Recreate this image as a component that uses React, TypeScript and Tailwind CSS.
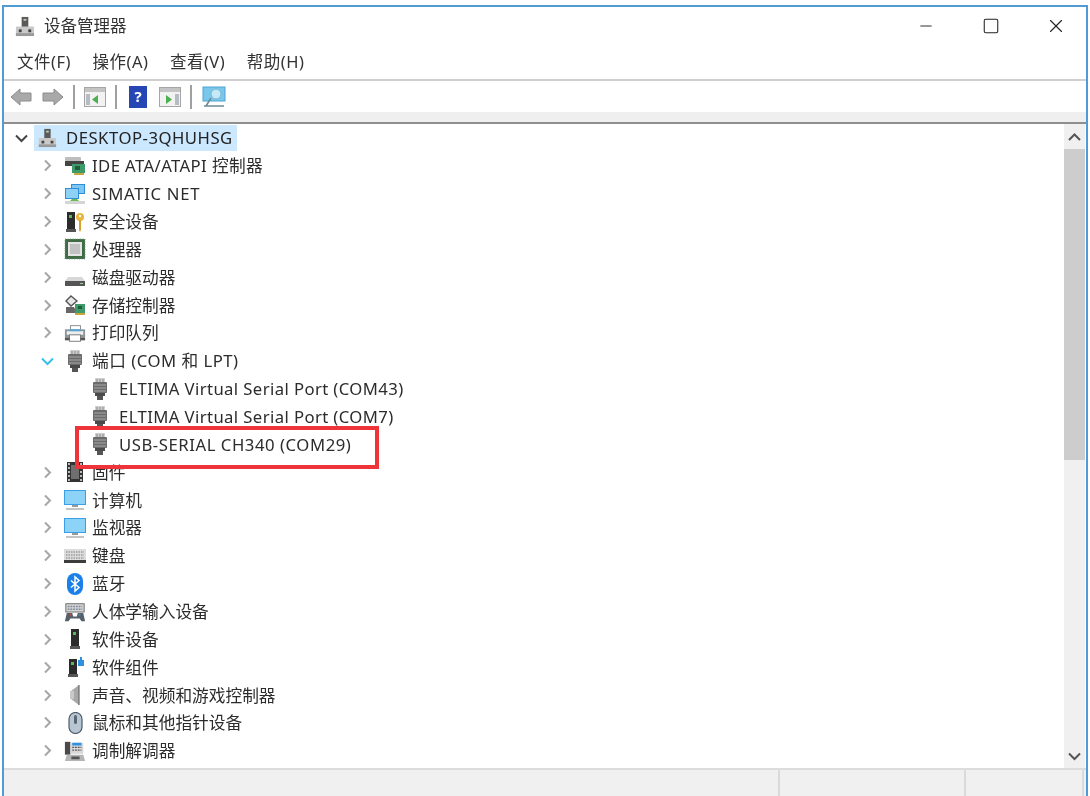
import { Minus, Square, X } from "lucide-react";

const font = { fontFamily: '"Noto Sans", "Noto Sans CJK SC", sans-serif' };

function Caret({ dir, className }: { dir: "right" | "down" | "up"; className: string }) {
  const d = dir === "right" ? "M2 1.5L7 6.5L2 11.5" : dir === "down" ? "M1 2.5L6.5 8L12 2.5" : "M1 8L6.5 2.5L12 8";
  const w = dir === "right" ? 9 : 13;
  const h = dir === "right" ? 13 : 10;
  return (
    <svg width={w} height={h} viewBox={`0 0 ${w} ${h}`} className={className}>
      <path d={d} fill="none" stroke="currentColor" strokeWidth="2" />
    </svg>
  );
}

function PcTree({ size = 22 }: { size?: number }) {
  return (
    <svg width={size} height={size} viewBox="0 0 22 22">
      <rect x="8" y="1" width="7" height="11" fill="#5a5a5a" />
      <rect x="10" y="3" width="3" height="2" fill="#b8c8b0" />
      <rect x="2" y="11" width="19" height="10" rx="1" fill="#c9c9c9" />
      <rect x="2" y="18" width="19" height="3" fill="#9a9a9a" />
      <rect x="5" y="14" width="3" height="3" fill="#444" />
      <rect x="15" y="14" width="3" height="3" fill="#444" />
    </svg>
  );
}

function PortIcon() {
  return (
    <svg width="18" height="22" viewBox="0 0 18 22">
      <rect x="4" y="0" width="10" height="4" fill="#cfcfcf" />
      <path d="M6 1v3M9 1v3M12 1v3" stroke="#8a8a8a" strokeWidth="1" />
      <rect x="2" y="4" width="14" height="11" rx="1" fill="#6b6b6b" />
      <path d="M3 7h12M3 10h12M3 13h12" stroke="#a9a9a9" strokeWidth="1" />
      <rect x="4" y="15" width="10" height="3" fill="#4a4a4a" />
      <rect x="6" y="18" width="6" height="4" fill="#555" />
    </svg>
  );
}

function IdeIcon() {
  return (
    <svg width="22" height="22" viewBox="0 0 22 22">
      <rect x="1" y="2" width="16" height="4" rx="1" fill="#bdbdbd" />
      <rect x="1" y="6" width="19" height="5" fill="#444" />
      <rect x="8" y="9" width="13" height="9" fill="#3f9a6a" />
      <rect x="11" y="11" width="5" height="4" fill="#1e5c3e" />
      <rect x="10" y="18" width="10" height="2" fill="#c9a53c" />
    </svg>
  );
}

function NetIcon() {
  return (
    <svg width="22" height="22" viewBox="0 0 22 22">
      <rect x="7" y="1" width="14" height="10" fill="#2f8fd8" />
      <rect x="8" y="2" width="12" height="8" fill="#7fc6f0" />
      <rect x="1" y="5" width="14" height="11" fill="#2f8fd8" />
      <rect x="2" y="6" width="12" height="9" fill="#8fd0f5" />
      <rect x="1" y="18" width="20" height="3" fill="#d5d5d5" />
      <path d="M8 16h5l2 2H6z" fill="#6dbb4e" />
    </svg>
  );
}

function SecurityIcon() {
  return (
    <svg width="22" height="22" viewBox="0 0 22 22">
      <rect x="3" y="1" width="8" height="17" fill="#2b2b2b" />
      <rect x="5" y="4" width="3" height="3" fill="#58b85a" />
      <rect x="2" y="18" width="10" height="3" fill="#555" />
      <circle cx="16" cy="6" r="4" fill="#e8b63e" />
      <circle cx="16" cy="5" r="1.2" fill="#fff" />
      <path d="M15 9h2v10l-1 2-1-2z" fill="#d9a22e" />
    </svg>
  );
}

function CpuIcon() {
  return (
    <svg width="22" height="22" viewBox="0 0 22 22">
      <rect x="1" y="1" width="20" height="20" fill="#3f6b45" />
      <rect x="1" y="1" width="20" height="20" fill="none" stroke="#7f9f84" strokeWidth="1" strokeDasharray="1 1.5" />
      <rect x="4" y="4" width="14" height="14" fill="#e4e4e4" />
      <rect x="6" y="6" width="10" height="10" fill="#c2c2c2" />
    </svg>
  );
}

function DiskIcon() {
  return (
    <svg width="22" height="22" viewBox="0 0 22 22">
      <path d="M4 11h14l3 4H1z" fill="#d8d8d8" />
      <rect x="1" y="15" width="20" height="5" fill="#555" />
      <rect x="16" y="17" width="3" height="1" fill="#9ed09e" />
    </svg>
  );
}

function StorageIcon() {
  return (
    <svg width="22" height="22" viewBox="0 0 22 22">
      <path d="M7 2l6 5-6 5-5-5z" fill="#e8e8e8" stroke="#555" strokeWidth="1.4" />
      <path d="M2 13l8 0 3 6H2z" fill="#666" />
      <rect x="11" y="10" width="10" height="9" fill="#3f9a6a" />
      <rect x="14" y="12" width="4" height="3" fill="#1e5c3e" />
      <rect x="11" y="19" width="10" height="2" fill="#c9a53c" />
    </svg>
  );
}

function PrinterIcon() {
  return (
    <svg width="24" height="22" viewBox="0 0 24 22">
      <rect x="7" y="3" width="11" height="5" fill="#fff" stroke="#888" />
      <rect x="1" y="7" width="22" height="9" fill="#8a949c" />
      <rect x="3" y="9" width="18" height="4" fill="#eee" />
      <rect x="6" y="7" width="12" height="2" fill="#4fa8d8" />
      <rect x="6" y="13" width="12" height="7" fill="#fff" stroke="#777" />
      <rect x="1" y="16" width="5" height="3" fill="#555" />
      <rect x="18" y="16" width="5" height="3" fill="#555" />
    </svg>
  );
}

function FirmwareIcon() {
  return (
    <svg width="22" height="22" viewBox="0 0 22 22">
      <rect x="3" y="1" width="16" height="20" fill="#333" />
      <path d="M5 2v18M17 2v18" stroke="#ddd" strokeWidth="1.6" strokeDasharray="2 2" />
      <rect x="7" y="4" width="8" height="14" fill="#6f6f6f" />
    </svg>
  );
}

function MonitorIcon() {
  return (
    <svg width="22" height="22" viewBox="0 0 22 22">
      <rect x="0" y="1" width="22" height="15" fill="#3aa0e6" />
      <rect x="1" y="2" width="20" height="13" fill="#8dd2f7" />
      <rect x="8" y="16" width="6" height="2" fill="#9a9a9a" />
      <rect x="2" y="19" width="18" height="2" fill="#c4c4c4" />
    </svg>
  );
}

function KeyboardIcon() {
  return (
    <svg width="22" height="22" viewBox="0 0 22 22">
      <rect x="0" y="4" width="22" height="11" fill="#dcdcdc" />
      <path d="M2 7h18M2 10h18M2 13h18" stroke="#9c9c9c" strokeWidth="1.4" strokeDasharray="1.5 1" />
      <rect x="0" y="15" width="22" height="3" fill="#3c3c3c" />
    </svg>
  );
}

function BluetoothIcon() {
  return (
    <svg width="22" height="22" viewBox="0 0 22 22">
      <rect x="3" y="0" width="16" height="22" rx="8" fill="#1a7fe8" />
      <path d="M7 7.5l8 7-4 3.5V4l4 3.5-8 7" fill="none" stroke="#fff" strokeWidth="1.5" />
    </svg>
  );
}

function HidIcon() {
  return (
    <svg width="24" height="22" viewBox="0 0 24 22">
      <rect x="2" y="2" width="20" height="9" fill="#d5d5d5" stroke="#666" />
      <path d="M4 5h16M4 8h16" stroke="#7c8c9c" strokeWidth="1.4" strokeDasharray="2 1" />
      <path d="M1 21l2-9h6l1 4h4l1-4h6l2 9h-4l-2-3H7l-2 3z" fill="#56606a" />
      <circle cx="7" cy="14" r="1" fill="#c44" />
      <circle cx="17" cy="14" r="1" fill="#48c" />
    </svg>
  );
}

function SoftwareDeviceIcon() {
  return (
    <svg width="22" height="22" viewBox="0 0 22 22">
      <rect x="7" y="1" width="8" height="17" fill="#2b2b2b" />
      <rect x="9" y="4" width="3" height="3" fill="#58b85a" />
      <rect x="6" y="18" width="10" height="3" fill="#555" />
    </svg>
  );
}

function SoftwareComponentIcon() {
  return (
    <svg width="22" height="22" viewBox="0 0 22 22">
      <rect x="5" y="3" width="8" height="15" fill="#2b2b2b" />
      <rect x="7" y="6" width="3" height="3" fill="#58b85a" />
      <rect x="4" y="18" width="10" height="3" fill="#555" />
      <rect x="14" y="4" width="6" height="6" fill="#2f8fe0" />
      <rect x="16" y="1" width="2" height="3" fill="#2f8fe0" />
    </svg>
  );
}

function SoundIcon() {
  return (
    <svg width="22" height="22" viewBox="0 0 22 22">
      <path d="M7 7l8-6v20l-8-6z" fill="#a8a8a8" />
      <rect x="6" y="7" width="4" height="8" fill="#c9c9c9" />
      <path d="M15 1v20" stroke="#6a6a6a" strokeWidth="1.2" />
    </svg>
  );
}

function MouseIcon() {
  return (
    <svg width="22" height="22" viewBox="0 0 22 22">
      <rect x="5" y="0.5" width="13" height="21" rx="6.5" fill="#b8c6d4" stroke="#4e5a66" strokeWidth="1.2" />
      <rect x="10" y="3" width="3" height="9" rx="1.5" fill="#5a6672" />
    </svg>
  );
}

function ModemIcon() {
  return (
    <svg width="24" height="24" viewBox="0 0 24 24">
      <rect x="1" y="2" width="6" height="14" fill="#4a4a4a" />
      <rect x="7" y="3" width="14" height="12" fill="#d8d8d8" />
      <rect x="9" y="3" width="10" height="3" fill="#2f8fe0" />
      <path d="M9 8h10M9 11h10" stroke="#555" strokeWidth="1.5" strokeDasharray="2 1" />
      <path d="M3 16h18l2 7H1z" fill="#b5b5b5" />
      <rect x="8" y="18" width="9" height="3" fill="#555" />
    </svg>
  );
}

function CategoryRow({ icon, label, open, track = "" }: { icon: React.ReactNode; label: string; open?: boolean; track?: string }) {
  return (
    <div className="flex h-[27.86px] items-center pl-[35px]">
      <div className="flex w-[14px] justify-center">
        {open ? <Caret dir="down" className="text-[#39c0ea]" /> : <Caret dir="right" className="text-[#a6a6a6]" />}
      </div>
      <div className="ml-[10px] flex w-[22px] justify-center">{icon}</div>
      <span className={`ml-[6px] text-[16.7px] text-[#2c2c2c] whitespace-nowrap ${track}`}>{label}</span>
    </div>
  );
}

function PortRow({ label, track }: { label: string; track: string }) {
  return (
    <div className="flex h-[27.86px] items-center pl-[86px]">
      <PortIcon />
      <span className={`ml-[10px] text-[16.7px] text-[#2c2c2c] whitespace-nowrap ${track}`}>{label}</span>
    </div>
  );
}

function ToolSep() {
  return <div className="mx-[9px] h-[24px] w-[2px] bg-[#a0a0a0]" />;
}

function PaneIcon({ right }: { right?: boolean }) {
  return (
    <svg width="22" height="20" viewBox="0 0 22 20">
      <rect x="0.5" y="0.5" width="21" height="19" fill="#f2f2f2" stroke="#a5a5a5" />
      <rect x="1" y="1" width="20" height="4" fill="#c4c4c4" />
      <rect x={right ? 16 : 2} y="7" width="4" height="11" fill="#b5bcc4" />
      <path d={right ? "M7 8l6 4.5-6 4.5z" : "M14 8l-6 4.5 6 4.5z"} fill="#4caf50" />
    </svg>
  );
}

export default function App() {
  return (
    <div className="h-[796px] w-[1090px] overflow-hidden bg-white pt-[5px] pl-[2px] pr-[2px] blur-[0.35px]" style={font}>
      <div className="relative flex h-[791px] flex-col border-x-2 border-t-2 border-[#4f9bd6] bg-white">
        {/* Title bar */}
        <div className="flex h-[38px] items-center pl-[10px]">
          <PcTree size={21} />
          <span className="ml-[9px] text-[16.5px] text-[#333]">设备管理器</span>
          <div className="ml-auto flex items-center pr-[19px]">
            <Minus size={18} strokeWidth={1.4} className="text-[#333]" />
            <Square size={18} strokeWidth={1.4} className="ml-[47px] text-[#222]" />
            <X size={22} strokeWidth={1.2} className="ml-[45px] text-[#222]" />
          </div>
        </div>

        {/* Menu */}
        <div className="flex h-[36px] items-center gap-[21.5px] border-b-2 border-[#cfcfcf] pl-[13px] text-[16.5px] tracking-[0.5px] text-[#333]">
          <span>文件(F)</span>
          <span>操作(A)</span>
          <span>查看(V)</span>
          <span>帮助(H)</span>
        </div>

        {/* Toolbar */}
        <div className="flex h-[31px] items-center pl-[6px]">
          <svg width="22" height="18" viewBox="0 0 22 18">
            <path d="M10 1L1 9l9 8v-4h11V5H10z" fill="#a9a9a9" stroke="#8c8c8c" />
          </svg>
          <svg width="22" height="18" viewBox="0 0 22 18" className="ml-[10px]">
            <path d="M12 1l9 8-9 8v-4H1V5h11z" fill="#a9a9a9" stroke="#8c8c8c" />
          </svg>
          <ToolSep />
          <PaneIcon />
          <ToolSep />
          <div className="ml-[3px] flex h-[22px] w-[18px] items-center justify-center bg-[#2546b4] text-[15px] font-bold text-white">?</div>
          <div className="ml-[12px]">
            <PaneIcon right />
          </div>
          <ToolSep />
          <svg width="24" height="22" viewBox="0 0 24 22" className="ml-[1px]">
            <rect x="1" y="1" width="22" height="14" fill="#78c8ee" stroke="#4ea4d0" />
            <circle cx="14" cy="8" r="5" fill="#c4e8f8" stroke="#7fb6cc" />
            <path d="M9 12l-5 8M2 20h20" stroke="#6f8b96" strokeWidth="1.6" />
          </svg>
        </div>

        {/* Strip above tree */}
        <div className="h-[12px] border-b-2 border-[#8e8e8e] bg-[#efefef]" />

        {/* Tree + scrollbar */}
        <div className="flex h-[644px] pl-px">
          <div className="flex-1 overflow-hidden">
            <div className="flex h-[27.86px] items-center pl-[9px]">
              <div className="flex w-[14px] justify-center">
                <Caret dir="down" className="text-[#444]" />
              </div>
              <div className="ml-[6px] flex h-[26px] items-center bg-[#cce8ff] pl-[3px] pr-[4px]">
                <PcTree size={20} />
                <span className="ml-[9px] text-[16.7px] tracking-[0.5px] text-[#222]">DESKTOP-3QHUHSG</span>
              </div>
            </div>
            <CategoryRow icon={<IdeIcon />} label="IDE ATA/ATAPI 控制器" track="tracking-[0.4px]" />
            <CategoryRow icon={<NetIcon />} label="SIMATIC NET" track="tracking-[0.7px]" />
            <CategoryRow icon={<SecurityIcon />} label="安全设备" />
            <CategoryRow icon={<CpuIcon />} label="处理器" />
            <CategoryRow icon={<DiskIcon />} label="磁盘驱动器" />
            <CategoryRow icon={<StorageIcon />} label="存储控制器" />
            <CategoryRow icon={<PrinterIcon />} label="打印队列" />
            <CategoryRow icon={<PortIcon />} label="端口 (COM 和 LPT)" open track="tracking-[0.5px]" />
            <PortRow label="ELTIMA Virtual Serial Port (COM43)" track="tracking-[0.4px]" />
            <PortRow label="ELTIMA Virtual Serial Port (COM7)" track="tracking-[0.4px]" />
            <PortRow label="USB-SERIAL CH340 (COM29)" track="tracking-[0.55px]" />
            <CategoryRow icon={<FirmwareIcon />} label="固件" />
            <CategoryRow icon={<MonitorIcon />} label="计算机" />
            <CategoryRow icon={<MonitorIcon />} label="监视器" />
            <CategoryRow icon={<KeyboardIcon />} label="键盘" />
            <CategoryRow icon={<BluetoothIcon />} label="蓝牙" />
            <CategoryRow icon={<HidIcon />} label="人体学输入设备" />
            <CategoryRow icon={<SoftwareDeviceIcon />} label="软件设备" />
            <CategoryRow icon={<SoftwareComponentIcon />} label="软件组件" />
            <CategoryRow icon={<SoundIcon />} label="声音、视频和游戏控制器" />
            <CategoryRow icon={<MouseIcon />} label="鼠标和其他指针设备" />
            <CategoryRow icon={<ModemIcon />} label="调制解调器" />
          </div>
          <div className="mr-[1px] flex w-[21px] flex-col bg-[#f0f0f0]">
            <div className="flex h-[25px] items-center justify-center">
              <Caret dir="up" className="text-[#555]" />
            </div>
            <div className="h-[311px] bg-[#cdcdcd]" />
            <div className="mt-auto flex h-[25px] items-center justify-center">
              <Caret dir="down" className="text-[#555]" />
            </div>
          </div>
        </div>

        {/* Status bar */}
        <div className="flex flex-1 border-t-2 border-[#dcdcdc] bg-[#f0f0f0]">
          <div className="w-[776px] border-r-2 border-[#dadada]" />
          <div className="w-[186px] border-r-2 border-[#dadada]" />
          <div className="w-[118px] border-r-2 border-[#dadada]" />
        </div>

        {/* Red annotation box */}
        <div className="absolute top-[419px] left-[71px] h-[43px] w-[304px] border-[4px] border-[#ee3438]" />
      </div>
    </div>
  );
}
